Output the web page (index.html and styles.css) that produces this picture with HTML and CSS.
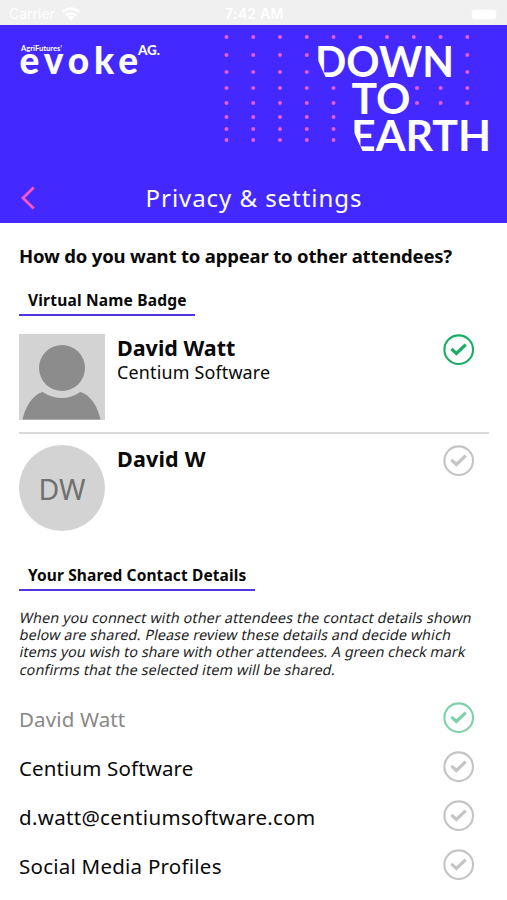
FILE: index.html
```html
<!DOCTYPE html>
<html lang="en">
<head>
<meta charset="utf-8">
<title>Privacy &amp; settings</title>
<link rel="stylesheet" href="styles.css">
</head>
<body>
<svg class="defs" aria-hidden="true">
  <symbol id="check" viewBox="0 0 32 32">
    <circle cx="15.700" cy="15.700" r="14.3" fill="none" stroke="currentColor" stroke-width="2.1"/>
    <path d="M8.400 14.800L13.400 19.500L22.700 10.600" fill="none" stroke="currentColor" stroke-width="3.2"/>
  </symbol>
</svg>
<div class="status">
  <span class="carrier">Carrier</span>
  <svg class="wifi" viewBox="0 0 18 14"><path d="M1 5Q9-2 17 5M4 8.5Q9 4 14 8.5" fill="none" stroke="currentColor" stroke-width="2.6"/><path d="M5.8 10Q9 7.500 12.200 10L9 13.500Z" fill="currentColor"/></svg>
  <span class="time">7:42 AM</span>
  <span class="battery"></span>
</div>
<header class="header">
  <svg class="banner" viewBox="0 25 507 148">
    <g class="dots">
      <path d="M226.500 37h.01M253.200 37h.01M280 37h.01M306.800 37h.01M333.500 37h.01M360.300 37h.01M387 37h.01M413.800 37h.01M440.600 37h.01M467.300 37h.01"/>
      <path d="M226.500 55h.01M253.200 55h.01M280 55h.01M306.800 55h.01M467.300 55h.01M226.500 72h.01M253.200 72h.01M280 72h.01M306.800 72h.01M467.300 72h.01"/>
      <path d="M226.500 88h.01M253.200 88h.01M280 88h.01M306.800 88h.01M333.500 88h.01M417 88h.01M440.600 88h.01M467.300 88h.01"/>
      <path d="M226.500 103h.01M253.200 103h.01M280 103h.01M306.800 103h.01M333.500 103h.01M417 103h.01M440.600 103h.01M467.300 103h.01"/>
      <path d="M226.500 117h.01M253.200 117h.01M280 117h.01M306.800 117h.01M333.500 117h.01M226.500 129h.01M253.200 129h.01M280 129h.01M306.800 129h.01M333.500 129h.01M226.500 140h.01M253.200 140h.01M280 140h.01M306.800 140h.01M333.500 140h.01"/>
    </g>
    <g class="slogan">
      <text x="315" y="76.500" textLength="139" lengthAdjust="spacingAndGlyphs">DOWN</text>
      <text x="351.500" y="113.500" textLength="59" lengthAdjust="spacingAndGlyphs">TO</text>
      <text x="351" y="150.500" textLength="140" lengthAdjust="spacingAndGlyphs">EARTH</text>
    </g>
    <path d="M316 56L326 78H316ZM352 128L363 152H352Z" fill="#4329ff"/>
    <text class="agri" x="21" y="50.500" textLength="41" lengthAdjust="spacingAndGlyphs">AgriFutures’</text>
    <text class="evoke" x="19.500" y="74" textLength="118.500" lengthAdjust="spacing">evoke</text>
    <text class="ag" x="138" y="54.500" textLength="22" lengthAdjust="spacingAndGlyphs">AG.</text>
  </svg>
  <div class="titlebar">
    <svg class="back" viewBox="0 0 14 24"><path d="M12.700 1.500L2 12L12.700 22.500" fill="none" stroke="#f857c1" stroke-width="2.800"/></svg>
    <h1>Privacy &amp; settings</h1>
  </div>
</header>
<main>
  <h2>How do you want to appear to other attendees?</h2>
  <h3 class="tab badge-tab"><span>Virtual Name Badge</span></h3>
  <section class="person first">
    <svg class="avatar" viewBox="0 0 86 86"><path d="M0 0H86V86H0Z" fill="#d3d3d3"/><circle cx="43" cy="34" r="23" fill="#8c8c8c"/><path d="M3.500 85.500C6 74 13 61 23.500 58Q43 70 61.500 58C73 62 79 74 81.500 85.500Z" fill="#8c8c8c"/></svg>
    <div class="who"><b class="full">David Watt</b><span class="company">Centium Software</span></div>
    <svg class="check on"><use href="#check"/></svg>
  </section>
  <section class="person">
    <div class="initials"><span>DW</span></div>
    <div class="who"><b class="short">David W</b></div>
    <svg class="check"><use href="#check"/></svg>
  </section>
  <h3 class="tab contact-tab"><span>Your Shared Contact Details</span></h3>
  <p class="note"><span>When you connect with other attendees the contact details shown</span> <span>below are shared. Please review these details and decide which</span> <span class="tight">items you wish to share with other attendees. A green check mark</span> <span>confirms that the selected item will be shared.</span></p>
  <ul>
    <li class="locked"><span>David Watt</span><svg class="check on"><use href="#check"/></svg></li>
    <li><span>Centium Software</span><svg class="check"><use href="#check"/></svg></li>
    <li><span class="email">d.watt@centiumsoftware.com</span><svg class="check"><use href="#check"/></svg></li>
    <li><span class="social">Social Media Profiles</span><svg class="check"><use href="#check"/></svg></li>
  </ul>
</main>
</body>
</html>
```
FILE: styles.css
```css
* { box-sizing: border-box; margin: 0; padding: 0; }
body { width: 507px; height: 900px; overflow: hidden; background: #fff; color: #090909; font-family: "Noto Sans", sans-serif; }
.defs { display: none; }
svg { display: block; flex: none; }
.status { height: 25px; background: #f0f0f0; color: #fff; display: grid; grid-template-columns: 53px 163px 60px 1fr 24px; align-items: center; padding: 3px 11px 0 9px; font: 14px/20px Inter, sans-serif; }
.wifi { width: 18px; height: 14px; }
.time { font-weight: 600; white-space: nowrap; grid-column: 3; letter-spacing: .3px; }
.battery { grid-column: 5; height: 9px; border-radius: 3px; background: #fff; box-shadow: 0 0 2px #fff; }
.header { height: 198px; background: #4329ff; color: #fff; }
.banner { width: 507px; height: 148px; }
.dots { fill: none; stroke: #e65bd2; stroke-width: 4; stroke-linecap: round; }
.slogan { font: 700 42.500px Lato, sans-serif; fill: #fff; }
.agri { font: 700 8px Lato, sans-serif; fill: #fff; }
.evoke { font: 900 37px Lato, sans-serif; fill: #fff; }
.ag { font: 900 13px Lato, sans-serif; fill: #fff; }
.titlebar { height: 50px; display: grid; grid-template-columns: 14px 1fr 14px; align-items: center; padding: 0 20px 0 21px; }
.back { width: 14px; height: 24px; }
h1 { font-size: 24px; line-height: 32px; font-weight: 400; letter-spacing: .95px; text-align: center; }
main { padding: 17px 18px 0 19px; }
h2 { font-size: 18.5px; line-height: 32px; font-weight: 700; letter-spacing: -.18px; white-space: nowrap; }
.tab { height: 30px; border-bottom: 2px solid #4e36e2; padding-left: 9px; font-size: 15.500px; line-height: 29px; font-weight: 700; letter-spacing: .2px; white-space: nowrap; }
.badge-tab { width: 176px; margin-top: 14px; }
.person { display: grid; grid-template-columns: 86px 1fr 32px; column-gap: 12px; padding-right: 14px; align-items: start; height: 111px; padding-top: 11.400px; }
.person.first { height: 100px; margin-top: 18px; padding-top: 0; border-bottom: 2px solid #dadada; }
.avatar, .initials { width: 86px; height: 86px; }
.initials { border-radius: 50%; background: #d3d3d3; color: #707070; font-size: 28.500px; display: grid; place-items: center; padding-top: 2px; }
.who { display: flex; flex-direction: column; align-items: flex-start; white-space: nowrap; }
.who b { font-size: 21.500px; line-height: 28px; }
.short { letter-spacing: .2px; }
.company { font-size: 17.900px; line-height: 20px; letter-spacing: .18px; }
.check { width: 32px; height: 32px; color: #c4c4c4; }
.check.on { color: #19ad65; }
.contact-tab { width: 236px; margin-top: 16px; letter-spacing: .11px; }
.note { margin: 18px 0 0 1px; font-size: 14.300px; line-height: 17.200px; letter-spacing: .14px; color: #222; }
.note span { display: block; white-space: nowrap; width: max-content; transform: skewX(-12deg); }
.note .tight { letter-spacing: .05px; }
ul { list-style: none; margin-top: 15.500px; }
li { height: 49px; display: flex; align-items: center; justify-content: space-between; padding-right: 14px; font-size: 20.500px; letter-spacing: .13px; }
li span { padding-top: 3px; white-space: nowrap; }
.email { letter-spacing: .31px; }
.social { letter-spacing: .24px; }
.locked { color: #888; }
.locked .check { opacity: .55; }
```
